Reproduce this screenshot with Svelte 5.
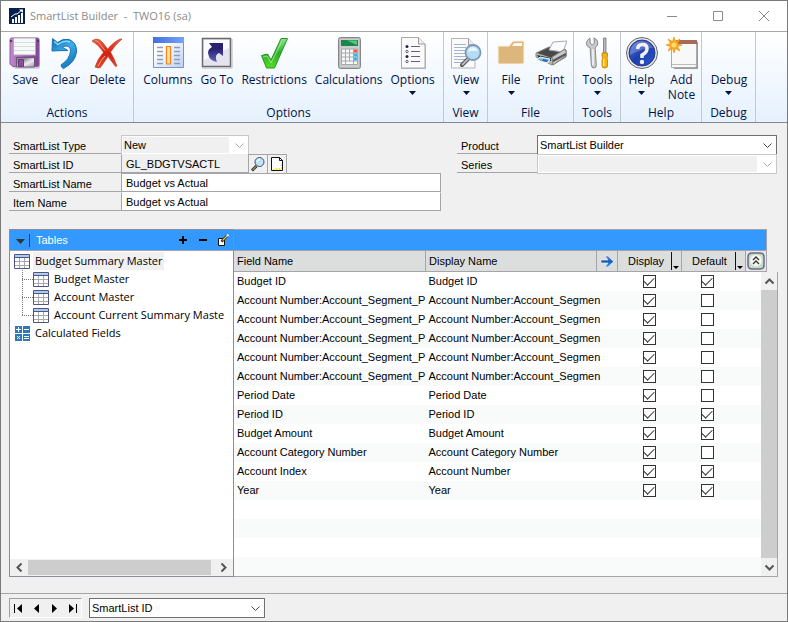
<script>
  const groups = [
    { name: 'Actions', items: [{ label: 'Save', icon: 'save' }, { label: 'Clear', icon: 'clear' }, { label: 'Delete', icon: 'delete' }] },
    {
      name: 'Options',
      items: [
        { label: 'Columns', icon: 'columns' },
        { label: 'Go To', icon: 'goto' },
        { label: 'Restrictions', icon: 'check' },
        { label: 'Calculations', icon: 'calc' },
        { label: 'Options', icon: 'options', menu: true },
      ],
    },
    { name: 'View', items: [{ label: 'View', icon: 'view', menu: true }] },
    { name: 'File', items: [{ label: 'File', icon: 'file', menu: true }, { label: 'Print', icon: 'print' }] },
    { name: 'Tools', items: [{ label: 'Tools', icon: 'tools', menu: true }] },
    { name: 'Help', items: [{ label: 'Help', icon: 'help', menu: true }, { label: 'Add Note', icon: 'note' }] },
    { name: 'Debug', items: [{ label: 'Debug', icon: 'none', menu: true }] },
  ];

  const segment = { field: 'Account Number:Account_Segment_P', display: 'Account Number:Account_Segmen', shown: true, def: false };
  let rows = $state([
    { field: 'Budget ID', display: 'Budget ID', shown: true, def: true },
    { ...segment },
    { ...segment },
    { ...segment },
    { ...segment },
    { ...segment },
    { field: 'Period Date', display: 'Period Date', shown: true, def: false },
    { field: 'Period ID', display: 'Period ID', shown: true, def: true },
    { field: 'Budget Amount', display: 'Budget Amount', shown: true, def: true },
    { field: 'Account Category Number', display: 'Account Category Number', shown: true, def: false },
    { field: 'Account Index', display: 'Account Number', shown: true, def: true },
    { field: 'Year', display: 'Year', shown: true, def: true },
  ]);

  const children = ['Budget Master', 'Account Master', 'Account Current Summary Maste'];
  let smartListName = $state('Budget vs Actual');
  let itemName = $state('Budget vs Actual');
</script>

{#snippet chevron(dir)}
  <svg class="chev" width="11" height="11" viewBox="0 0 11 11" aria-hidden="true">
    {#if dir === 'down'}<path d="M1.5 3.5l4 4 4-4" />
    {:else if dir === 'up'}<path d="M1.5 7.5l4-4 4 4" />
    {:else if dir === 'left'}<path d="M7.5 1.5l-4 4 4 4" />
    {:else}<path d="M3.5 1.5l4 4-4 4" />{/if}
  </svg>
{/snippet}

{#snippet tableIcon()}
  <svg width="16" height="15" viewBox="0 0 16 15" aria-hidden="true">
    <path fill="#fff" d="M0 0h16v15H0z" />
    <path stroke="#a9a9ad" d="M5.5 3v12M10.5 3v12M0 7.5h16M0 11.5h16" />
    <path fill="#a9cdf0" d="M1 1h14v2H1z" />
    <path stroke="#50547e" fill="none" d="M.5 .5h15v14H.5zM1 3.5h14" />
  </svg>
{/snippet}

{#snippet icon(name)}
  <svg width="32" height="32" viewBox="0 0 32 32" aria-hidden="true">
    {#if name === 'save'}
      <defs>
        <linearGradient id="sv" x2="1"><stop stop-color="#c08bcb" /><stop offset=".5" stop-color="#9a58ae" /><stop offset="1" stop-color="#7d4494" /></linearGradient>
        <linearGradient id="sv2" x2="1" y2="1"><stop offset=".3" stop-color="#8f8f93" /><stop offset=".6" stop-color="#ececf0" /><stop offset="1" stop-color="#9a9a9e" /></linearGradient>
      </defs>
      <path d="M2 3q0-2 2-2h24q2 0 2 2v26q0 2-2 2H5l-3-3z" fill="#8885" transform="translate(1 1)" />
      <path d="M1 2.500q0-1.500 1.500-1.500h26q1.500 0 1.500 1.500V28q0 1.500-1.500 1.500H4L1 27z" fill="url(#sv)" stroke="#8b5c9c" />
      <path fill="#f5faf8" stroke="#b8a4c2" d="M4.500 1h22v17h-22z" />
      <path stroke="#d3dedd" d="M5 5.500h21M5 9.500h21M5 13.500h21" />
      <path fill="url(#sv2)" stroke="#725080" d="M7.500 20.500h18v9.500h-18z" />
      <path fill="#8c4ca0" stroke="#5e4669" d="M9.500 22.500h5v7h-5z" />
      <path fill="#4c4152" d="M1 3h2v2H1zM28 3h2v2h-2z" />
    {:else if name === 'clear'}
      <defs><linearGradient id="cl" x2=".6" y2="1"><stop stop-color="#1468a6" /><stop offset=".5" stop-color="#3cacea" /><stop offset="1" stop-color="#1278c0" /></linearGradient></defs>
      <path d="M3.500 1.500l5 4Q14 1 20 2.500q8 3 7.500 12.500Q26.500 25 14.500 31.500q-2-.5-2.500-3.500 9-6 9.500-14 0-5-4.500-5-2 0-3.500 1.500l5.500 3q-8 0-16 .5z" fill="url(#cl)" stroke="#1873b5" />
      <path d="M5 4.500l4 3q6-5 12-2.500" fill="none" stroke="#90d5fa" stroke-width="1.500" />
    {:else if name === 'delete'}
      <defs><linearGradient id="dl" x2="0" y2="1"><stop stop-color="#ef5a3d" /><stop offset=".5" stop-color="#d32010" /><stop offset="1" stop-color="#e14b32" /></linearGradient></defs>
      <path d="M1 4q3-3 7-1.500 4 2.500 8.500 9.500Q23 4.500 29 2l2 0q-6 5-11.500 13 3.500 6 6.500 14l-1.500 .5q-4-5-7.500-10-4 6-7.500 11-3 1-5.500-.5 3-9 8.500-14.500Q8 8 1 4z" fill="url(#dl)" stroke="#c53925" stroke-width=".6" />
      <path d="M4 3.500q3 0 6 5l4 5M14 19q-4 4-7 10" fill="none" stroke="#f7a08b" />
    {:else if name === 'columns'}
      <defs>
        <linearGradient id="co" x2="1" y2="1"><stop offset=".3" stop-color="#fff" /><stop offset="1" stop-color="#b9d0f6" /></linearGradient>
        <linearGradient id="co2" x2="1"><stop stop-color="#3e70df" /><stop offset="1" stop-color="#79a3f4" /></linearGradient>
      </defs>
      <path fill="url(#co)" stroke="#7f95b8" d="M1.500 .5h30v30h-30z" />
      <path fill="url(#co2)" d="M1 0h31v6H1z" />
      <path d="M5 10.500h6M5 14.500h6M5 18.500h6M5 22.500h6M5 26.500h6M22 10.500h6M22 14.500h6M22 18.500h6M22 22.500h6M22 26.500h6" stroke="#8f9bb5" stroke-width="1.500" />
      <path fill="#ffe0a0" stroke="#f28418" stroke-width="1.200" d="M14.500 9.500h4v17.500h-4z" />
    {:else if name === 'goto'}
      <defs><linearGradient id="gt" x2="0" y2="1"><stop offset=".3" stop-color="#28206e" /><stop offset="1" stop-color="#6464bc" /></linearGradient></defs>
      <path fill="#e4e4ee" stroke="#6a6a6a" stroke-width="1.500" d="M1.500 1.500h28v28h-28z" />
      <path fill="#fff" opacity=".8" d="M3 3h25v8L3 23z" />
      <path d="M8 6h14v13l-4-3q-5 2-2 9-8-1-9-9 0-4 4-6z" fill="url(#gt)" />
      <path stroke="#b6b6b6" fill="none" d="M1 31h30V2" />
    {:else if name === 'check'}
      <defs><linearGradient id="ck" x2="0" y2="1"><stop stop-color="#8de68c" /><stop offset=".5" stop-color="#2aae28" /><stop offset="1" stop-color="#55e020" /></linearGradient></defs>
      <path d="M3.500 18.500l6-1.500 3.500 6L23 1.500h6.500l-13 29.500h-8z" fill="url(#ck)" stroke="#279327" />
      <path d="M5 20l4-1 4 7L24 4" fill="none" stroke="#b4f5a9" opacity=".7" />
    {:else if name === 'calc'}
      <rect x="5.500" y=".5" width="22" height="31" rx="2" fill="#b9bbbb" stroke="#858787" />
      <rect x="7" y="2" width="19" height="28" fill="#cbcdcd" />
      <rect x="8" y="3" width="17" height="6" fill="#19864b" />
      <path d="M14 3.500h10v4.500z" fill="#54c783" />
      <path d="M8.500 12h16v15.500h-16z" fill="#f7f9f9" />
      <path d="M8.500 12h16v15.500h-16zM12.500 12v15.500M16.500 12v12M20.500 12v15.500M8.500 16h16M8.500 20h16M8.500 24h16" fill="none" stroke="#a2a8ab" />
      <path fill="#f35850" d="M21 12.500h3v3h-3z" /><path fill="#37b4e8" d="M21 16.500h3v3h-3zM21 20.500h3v3h-3z" />
    {:else if name === 'options'}
      <path d="M4 .500h18l7 7V32H4z" fill="#bbb" />
      <path d="M4.500 .500h17l6.500 6.500v24H4.500z" fill="#fafafa" stroke="#aaa" />
      <path d="M21.500 .500v6.500h6.500" fill="#eee" stroke="#999" />
      <path d="M14 9.500h9M14 14.500h9M14 19.500h9M14 24.500h9" stroke="#6b5c80" />
      <circle cx="10" cy="9.500" r="1.500" fill="#252050" /><circle cx="10" cy="19.500" r="1.500" fill="#252050" />
      <circle cx="10" cy="14.500" r="1.200" fill="#fff" stroke="#403860" stroke-width=".8" /><circle cx="10" cy="24.500" r="1.200" fill="#fff" stroke="#403860" stroke-width=".8" />
    {:else if name === 'view'}
      <path d="M1.500 1.500h17l6.500 6.500v23h-23.500z" fill="#fafafa" stroke="#b5b5b5" />
      <path d="M18.500 1.500v6.500H25" fill="#eee" stroke="#999" />
      <path d="M4 7.500h12M4 10.500h12M4 13.500h18M4 16.500h18M4 19.500h18M4 22.500h18M4 25.500h12" stroke="#a3b3cf" />
      <path d="M19 21l-7 7" stroke="#555" stroke-width="4" stroke-linecap="round" /><path d="M19 21l-7 7" stroke="#bbb" stroke-width="2" />
      <circle cx="23" cy="15.500" r="7.500" fill="#b6dcf4" stroke="#7f97b6" stroke-width="1.800" />
      <path d="M18 15q1-5 5-5 4 1 5 4-5-1-10 1z" fill="#e9f7ff" />
    {:else if name === 'file'}
      <path d="M3 9h11l4-5h11v22q0 1-1 1H4q-1 0-1-1z" fill="#dcb67a" stroke="#fff3df" />
      <path d="M17 9l2-3h8v3z" fill="#fffaf2" />
    {:else if name === 'print'}
      <path d="M1 16l13-6 17 3v7l-14 8L1 20z" fill="#b5b5b5" stroke="#888" />
      <path d="M2 16l13-6 15 3-13 8z" fill="#474849" />
      <path d="M14 13l4-8 14-1-4 11z" fill="#fbfbfb" stroke="#aaa" />
      <path d="M17 20l13-8 1 2v5l-13 9z" fill="#c7c7c7" stroke="#777" />
      <path d="M18 24l13-7" stroke="#595959" stroke-width="2" />
      <path d="M2 18l14 3v3L4 21z" fill="#2e2e2e" />
      <path d="M5 20l10 2-2 4-11-3z" fill="#8ac8f0" stroke="#eee" /><path d="M8 22l5 1-1 2-5-1z" fill="#2267bd" /><path d="M4 22l3 1-1 1z" fill="#35a24b" />
    {:else if name === 'tools'}
      <path d="M9 1v5l2 2 2-2V1q3.500 1.500 3.500 5 0 3-3 5v17q0 3-2.500 3t-2.500-3V11q-3.500-2-3.500-5Q5.500 2.500 9 1z" fill="#c7c9cb" stroke="#75787b" stroke-width=".8" transform="rotate(-4 11 16)" />
      <path d="M11 12v16" stroke="#f6f6f6" stroke-width="1.500" />
      <path d="M21.500 1h2.500v15h-2.500z" fill="#b8babd" stroke="#737679" stroke-width=".8" />
      <path d="M20 16h5.500v3l-.5 2 .5 2v6q0 2-2.800 2t-2.700-2v-6l.5-2-.5-2z" fill="#f6b50e" stroke="#c07b08" stroke-width=".8" />
      <path d="M21.700 22v7" stroke="#ffe484" stroke-width="1.500" />
    {:else if name === 'help'}
      <defs><linearGradient id="hp" x2="1" y2="1"><stop stop-color="#5573d6" /><stop offset=".5" stop-color="#1c3fae" /><stop offset="1" stop-color="#2b57cf" /></linearGradient></defs>
      <circle cx="16" cy="16" r="15.500" fill="#e6e6ea" stroke="#66676f" />
      <circle cx="16" cy="16" r="13" fill="url(#hp)" stroke="#27367c" />
      <path d="M4 18Q4 5 16 4q8 0 11 7-10 0-23 7z" fill="#fff" opacity=".22" />
      <path d="M11.500 12q.5-4.500 5-4.500t4.500 4-5 6.500v3" fill="none" stroke="#f2f2f5" stroke-width="3.500" />
      <circle cx="16" cy="25" r="2.200" fill="#f2f2f5" />
    {:else if name === 'note'}
      <path d="M8 5h24v27H8z" fill="#9a9a9a" /><path d="M5.500 4.500h25v24l-1 2H5.500z" fill="#f8f8f8" stroke="#aaa" />
      <path d="M6 27.500h24" stroke="#bbb" /><path d="M10 3h21v4H10z" fill="#a76a58" />
      <path d="M8 0l1.500 4.500L14 2l-2.500 4.500L16 8l-4.500 1.500L14 14l-4.500-2.500L8 16l-1.500-4.500L2 14l2.500-4.500L0 8l4.500-1.500L2 2l4.500 2.500z" fill="#f9ac18" stroke="#e98a0a" stroke-width=".6" />
      <circle cx="8" cy="8" r="2.500" fill="#ffdc72" />
    {/if}
  </svg>
{/snippet}

<div class="window">
  <header class="titlebar">
    <svg width="16" height="16" viewBox="0 0 16 16" aria-hidden="true">
      <path fill="#06214f" d="M0 0h16v16H0z" />
      <path fill="#fff" d="M3 11h2v4H3zM6 9h2v6H6zM9 7h2v8H9zM12 5h2v10h-2z" />
      <path d="M2 9l4-3 2 0 5-4" fill="none" stroke="#fff" /><path d="M10 1.500h4V5z" fill="#fff" />
    </svg>
    <h1>SmartList Builder&nbsp; -&nbsp; TWO16 (sa)</h1>
    <button aria-label="Minimize"><svg width="12" height="12" viewBox="0 0 12 12"><path d="M1 6.500h10" /></svg></button>
    <button aria-label="Maximize"><svg width="12" height="12" viewBox="0 0 12 12"><path d="M1.500 1.500h9v9h-9z" /></svg></button>
    <button aria-label="Close"><svg width="12" height="12" viewBox="0 0 12 12"><path d="M1 1l10 10M11 1L1 11" /></svg></button>
  </header>

  <nav class="ribbon" aria-label="Ribbon">
    {#each groups as g}
      <section>
        <div class="tools">
          {#each g.items as item}
            <button class:narrow={item.label === 'Add Note'}>
              {@render icon(item.icon)}
              <span>{item.label}</span>
              {#if item.menu}<svg class="drop" width="7" height="4" viewBox="0 0 7 4" aria-hidden="true"><path d="M0 0h7L3.500 4z" fill="#00124a" /></svg>{/if}
            </button>
          {/each}
        </div>
        <h2>{g.name}</h2>
      </section>
    {/each}
  </nav>

  <main>
    <form class="fields" onsubmit={(e) => e.preventDefault()}>
      <div class="left">
        <div class="row">
          <label for="type">SmartList Type</label>
          <div class="pick disabled short"><select id="type" disabled><option>New</option></select>{@render chevron('down')}</div>
        </div>
        <div class="row">
          <label for="sid">SmartList ID</label>
          <input id="sid" class="id" readonly value="GL_BDGTVSACTL" />
          <button type="button" class="mini" aria-label="Look up">
            <svg width="16" height="16" viewBox="0 0 16 16"><path d="M6.500 10L2 14.500" stroke="#333" stroke-width="3" /><path d="M6 10.500l-3.500 3.500" stroke="#e8c37a" /><circle cx="9.500" cy="6" r="4.500" fill="#bfe3f5" stroke="#39516e" /><path d="M7 6q0-2.500 3-2.500" stroke="#fff" fill="none" /></svg>
          </button>
          <button type="button" class="mini" aria-label="Note">
            <svg width="16" height="16" viewBox="0 0 16 16"><path d="M2.500 1.500h8l3 3v10h-11z" fill="#fff" stroke="#111" /><path d="M10.500 1.500v3h3" fill="none" stroke="#111" /><path d="M4 13.500h8.500V7M6 12.500h5" stroke="#f5ea3c" fill="none" stroke-dasharray="2 1" /></svg>
          </button>
        </div>
        <div class="row">
          <label for="name">SmartList Name</label>
          <input id="name" bind:value={smartListName} />
        </div>
        <div class="row">
          <label for="item">Item Name</label>
          <input id="item" bind:value={itemName} />
        </div>
      </div>
      <div class="right">
        <div class="row">
          <label for="product">Product</label>
          <div class="pick"><select id="product"><option>SmartList Builder</option></select>{@render chevron('down')}</div>
        </div>
        <div class="row">
          <label for="series">Series</label>
          <div class="pick disabled"><select id="series" disabled><option></option></select>{@render chevron('down')}</div>
        </div>
      </div>
    </form>

    <div class="panes">
      <aside>
        <div class="bar">
          <button class="collapse" aria-label="Tables menu"><svg width="14" height="13" viewBox="0 0 14 13"><path d="M0 5h9L4.500 10z" fill="#333" /><path d="M13.500 0v13" stroke="#333" /></svg></button>
          <h3>Tables</h3>
          <button aria-label="Add table"><svg width="12" height="12" viewBox="0 0 12 12"><path d="M2 6h8M6 2v8" stroke="#000" stroke-width="2" /></svg></button>
          <button aria-label="Remove table"><svg width="12" height="12" viewBox="0 0 12 12"><path d="M2 6h8" stroke="#000" stroke-width="2" /></svg></button>
          <button aria-label="Edit table"><svg width="12" height="12" viewBox="0 0 12 12"><path d="M1.500 4.500h6v7h-6z" fill="#fff" stroke="#111" /><path d="M4.500 7.500L10 2" stroke="#222" stroke-width="2.500" /><path d="M5.500 6.500L10 2" stroke="#f0c348" stroke-width="1.200" /><path d="M10 2l1.500-1.500" stroke="#eee" stroke-width="2" /></svg></button>
        </div>
        <ul class="tree">
          <li>
            <div class="node selected">{@render tableIcon()}<span>Budget Summary Master</span></div>
            <ul>
              {#each children as c}
                <li class="node child">{@render tableIcon()}<span>{c}</span></li>
              {/each}
            </ul>
          </li>
          <li class="node">
            <svg width="16" height="15" viewBox="0 0 16 15" aria-hidden="true"><path fill="#2d79bd" d="M1 0h7v7H1zM9 0h7v7H9zM1 8h7v7H1zM9 8h7v7H9z" /><path d="M2 3.500h5M4.500 1v5M10 3.500h5M3 10l3 3M6 10l-3 3M10 10.500h5M10 12.500h5" stroke="#fff" /></svg>
            <span>Calculated Fields</span>
          </li>
        </ul>
        <div class="hscroll">
          <button aria-label="Scroll left">{@render chevron('left')}</button>
          <div class="thumb"></div>
          <button aria-label="Scroll right">{@render chevron('right')}</button>
        </div>
      </aside>

      <section class="grid">
        <div class="strip"></div>
        <table>
          <thead>
            <tr>
              <th>Field Name</th>
              <th>Display Name</th>
              <th class="ic"><button aria-label="Expand"><svg width="14" height="13" viewBox="0 0 14 13"><defs><linearGradient id="ar" x2="0" y2="1"><stop stop-color="#7a83c9" /><stop offset=".5" stop-color="#1a5dbc" /><stop offset="1" stop-color="#29b3d8" /></linearGradient></defs><path d="M1 5h7L5 1h3l5.500 5.500L8 12H5l3-4H1z" fill="url(#ar)" stroke="#f4f8fc" stroke-width=".5" /></svg></button></th>
              <th class="opt"><span>Display</span><button aria-label="Display menu"><svg width="10" height="18" viewBox="0 0 10 18"><path d="M.5 0v18" stroke="#111" /><path d="M2 14h6l-3 3z" fill="#000" /></svg></button></th>
              <th class="opt"><span>Default</span><button aria-label="Default menu"><svg width="10" height="18" viewBox="0 0 10 18"><path d="M.5 0v18" stroke="#111" /><path d="M2 14h6l-3 3z" fill="#000" /></svg></button></th>
              <th class="ic"><button aria-label="Collapse rows"><svg width="20" height="20" viewBox="0 0 20 20"><path fill="#e6e6ee" d="M0 0h20v20H0z" /><path d="M6 2h8q4 0 4 4v8q0 4-4 4H6q-4 0-4-4V6q0-4 4-4z" fill="#c3dcbf" stroke="#6d6a88" stroke-width="1.500" /><circle cx="10" cy="9.500" r="6" fill="#f3f7f2" /><path d="M7 9l3-3 3 3M7 13l3-3 3 3" fill="none" stroke="#333" stroke-width="1.300" /></svg></button></th>
            </tr>
          </thead>
          <tbody>
            {#each rows as r, i}
              <tr>
                <td>{r.field}</td>
                <td>{r.display}</td>
                <td></td>
                <td class="c"><input type="checkbox" aria-label="Display row {i + 1}" bind:checked={r.shown} /></td>
                <td class="c"><input type="checkbox" aria-label="Default row {i + 1}" bind:checked={r.def} /></td>
                <td></td>
              </tr>
            {/each}
          </tbody>
        </table>
        <div class="vscroll">
          <button aria-label="Scroll up">{@render chevron('up')}</button>
          <div class="thumb"></div>
          <button aria-label="Scroll down">{@render chevron('down')}</button>
        </div>
      </section>
    </div>
  </main>

  <footer>
    <div class="nav">
      <button aria-label="First record"><svg width="9" height="9" viewBox="0 0 9 9"><path d="M0 0h1v9H0zM8 0v9L3 4.500z" /></svg></button>
      <button aria-label="Previous record"><svg width="9" height="9" viewBox="0 0 9 9"><path d="M7 0v9L2 4.500z" /></svg></button>
      <button aria-label="Next record"><svg width="9" height="9" viewBox="0 0 9 9"><path d="M2 0v9l5-4.500z" /></svg></button>
      <button aria-label="Last record"><svg width="9" height="9" viewBox="0 0 9 9"><path d="M8 0h1v9H8zM1 0v9l5-4.500z" /></svg></button>
    </div>
    <div class="pick sort"><select aria-label="Sort by"><option>SmartList ID</option></select>{@render chevron('down')}</div>
  </footer>
</div>

<style>
  :global(body) { margin: 0; }
  .window, .window * { box-sizing: border-box; }
  .window {
    min-height: 100vh;
    display: flex;
    flex-direction: column;
    border: 1px solid #7b7b7b;
    background: #f0f0f0;
    font: 11px/18px "Liberation Sans", Arial, sans-serif;
    color: #000;
  }
  h1, h2, h3 { margin: 0; font-weight: 400; }
  button { border: 0; padding: 0; background: none; color: inherit; font: inherit; display: flex; align-items: center; justify-content: center; }
  svg { display: block; flex: none; }

  .titlebar { display: flex; align-items: center; height: 31px; padding-left: 8px; background: #fff; border-bottom: 1px solid #a8a8a8; }
  .titlebar h1 { flex: 1; margin-left: 5px; font: 11px/18px "Open Sans", sans-serif; color: #8a8a8a; }
  .titlebar button { width: 46px; height: 28px; }
  .titlebar button svg { stroke: #8a8a8a; fill: none; }

  .ribbon {
    display: grid;
    grid-template-columns: 133px 310px 44px 86px 47px 81px 54px 1fr;
    height: 91px;
    background: linear-gradient(#fff, #e5f1fe);
    border-bottom: 1px solid #85898e;
    font: 12px/15px "Open Sans", sans-serif;
    color: #00124a;
  }
  .ribbon section { display: flex; flex-direction: column; justify-content: space-between; border-right: 1px solid #c3c9d0; }
  .tools { display: flex; justify-content: center; align-items: flex-start; gap: 8px; padding: 5px 0 0 1px; }
  .tools button { flex-direction: column; min-width: 32px; }
  .tools span { padding-top: 3px; white-space: nowrap; }
  .tools .narrow { width: 32px; }
  .tools .narrow span { white-space: normal; }
  .drop { margin-top: 4px; }
  .ribbon h2 { font-size: 12px; line-height: 18px; text-align: center; }

  main { flex: 1; display: flex; flex-direction: column; padding: 12px 9px 16px 8px; }
  .fields { display: flex; justify-content: space-between; align-items: flex-start; gap: 16px; padding-right: 1px; }
  .left { flex: 0 1 432px; }
  .right { flex: 0 1 320px; }
  .row { display: flex; height: 19px; }
  .row label { flex: 0 0 112px; padding: 3px 0 0 4px; line-height: 16px; border-bottom: 1px solid #a5a5a9; }
  .right .row label { flex-basis: 80px; }
  .row input { flex: 1; min-width: 0; padding: 0 0 0 4px; border: 1px solid #a5a5a9; border-top-color: #fff; background: #fff; font: inherit; border-radius: 0; outline: 0; }
  .row .id { flex: 0 0 127px; border-top-color: #f0f0f0; border-right: 0; background: #f0f0f0; }
  .row:nth-child(3) input { border-top-color: #a5a5a9; }
  .mini { width: 19px; border: 1px solid #a5a5a9; border-width: 1px 0 0 1px; }
  .mini:last-child { width: 20px; border-right-width: 1px; }

  .pick { display: grid; grid-template-columns: 1fr 19px; flex: 1; height: 20px; align-items: center; border: 1px solid #707070; background: #fff; }
  .pick > :global(*) { grid-row: 1; }
  .pick select { grid-column: 1 / 3; width: 100%; height: 18px; padding: 0 18px 0 2px; border: 0; appearance: none; background: none; color: #000; font: inherit; opacity: 1; outline: 0; }
  .pick .chev { grid-column: 2; margin-left: 5px; pointer-events: none; }
  .pick.disabled { border-color: #c8c8c8; }
  .pick.disabled select { background: linear-gradient(90deg, #f0f0f0 0, #f0f0f0 100%) 1px 1px / calc(100% - 20px) 16px no-repeat; }
  .pick.disabled .chev { stroke: #aaa; }
  .pick.short { flex: 0 0 128px; }
  .chev { fill: none; stroke: #444; }

  .panes { flex: 1; display: flex; margin-top: 18px; min-height: 348px; }
  aside { flex: 0 0 225px; min-width: 0; display: flex; flex-direction: column; border: 1px solid #8a8c9a; background: #fff; }
  .bar { display: flex; align-items: center; height: 21px; padding: 0 0 0 6px; background: #39f; color: #fff; border-bottom: 1px solid #a0a4ac; }
  .bar h3 { flex: 1; margin-left: 6px; font-size: 11px; }
  .bar button:not(.collapse) { width: 20px; }
  ul { list-style: none; margin: 0; padding: 0; }
  .tree { flex: 1; padding: 1px 0 0 4px; font: 11px/18px "Open Sans", sans-serif; }
  .tree ul { margin-left: 8px; }
  .node { display: flex; align-items: center; height: 18px; white-space: nowrap; }
  .node span { margin-left: 3px; padding: 0 2px; }
  .selected span { background: #f0f0f0; }
  .child { background: repeating-linear-gradient(#777 0 1px, #fff 1px 2px) 0 0 / 1px 100% no-repeat; }
  .child::before { content: ""; flex: none; width: 11px; border-top: 1px dotted #777; }
  .child:last-child { background-size: 1px 9px; }

  .hscroll { display: flex; height: 17px; padding: 1px; background: #f0f0f0; }
  .hscroll button { width: 17px; }
  .hscroll .thumb { flex: 1; margin-right: 4px; background: #cdcdcd; }
  .hscroll .chev, .vscroll .chev { stroke-width: 2; stroke: #555; }

  .grid { flex: 1; min-width: 0; display: grid; grid-template-columns: 1fr 17px; grid-template-rows: 22px 21px 1fr; }
  .strip { grid-column: 1 / 3; margin-right: 11px; background: #39f; border: 1px solid #a0a4ac; border-left: 0; }
  table { grid-column: 1 / 3; grid-row: 2 / 4; display: flex; flex-direction: column; min-width: 0; }
  thead { display: block; margin-right: 11px; }
  thead tr, tbody tr { display: grid; grid-template-columns: minmax(0, 192fr) minmax(0, 171fr) 21px 64px 64px 21px; }
  th { height: 21px; padding: 0 0 0 3px; background: #dcdedd; border-right: 1px solid #a5a5a9; border-bottom: 1px solid #a5a5a9; font-weight: 400; line-height: 21px; text-align: left; }
  th.ic { padding: 0; display: flex; align-items: center; justify-content: center; }
  th.opt { display: flex; justify-content: space-between; padding-left: 10px; }
  tbody {
    flex: 1;
    display: block;
    padding-right: 16px;
    border: 1px solid #a5a5a9;
    border-width: 0 1px 1px 0;
    background: repeating-linear-gradient(#fff 0 19px, #f9fafa 19px 38px);
  }
  tbody tr { grid-template-columns: minmax(0, 192fr) minmax(0, 171fr) 21px 64px 52px 28px; height: 19px; }
  td { padding: 0 0 0 3px; white-space: nowrap; line-height: 19px; }
  td.c { padding: 0; display: flex; justify-content: center; align-items: center; }
  input[type='checkbox'] { appearance: none; width: 13px; height: 13px; margin: 0; border: 1px solid #333; background: #fff; display: grid; place-items: center; }
  input[type='checkbox']:checked::before { content: ""; width: 9px; height: 5px; margin-bottom: 3px; border: 1px solid #333; border-width: 0 0 1px 1px; transform: rotate(-45deg); }
  .vscroll { grid-column: 2; grid-row: 3; display: flex; flex-direction: column; margin: 0 1px 1px 0; background: #f0f0f0; }
  .vscroll button { height: 18px; }
  .vscroll .thumb { flex: 1; background: #cdcdcd; }

  footer { display: flex; gap: 7px; padding: 4px 8px 3px; border-top: 1px solid #a5a5a9; }
  .nav { display: flex; width: 73px; height: 20px; border: 1px solid #a0a0a0; border-right-color: #fff; border-bottom-color: #fff; }
  .nav button { flex: 1; }
  .pick.sort { flex: 0 1 176px; height: 20px; }
</style>
